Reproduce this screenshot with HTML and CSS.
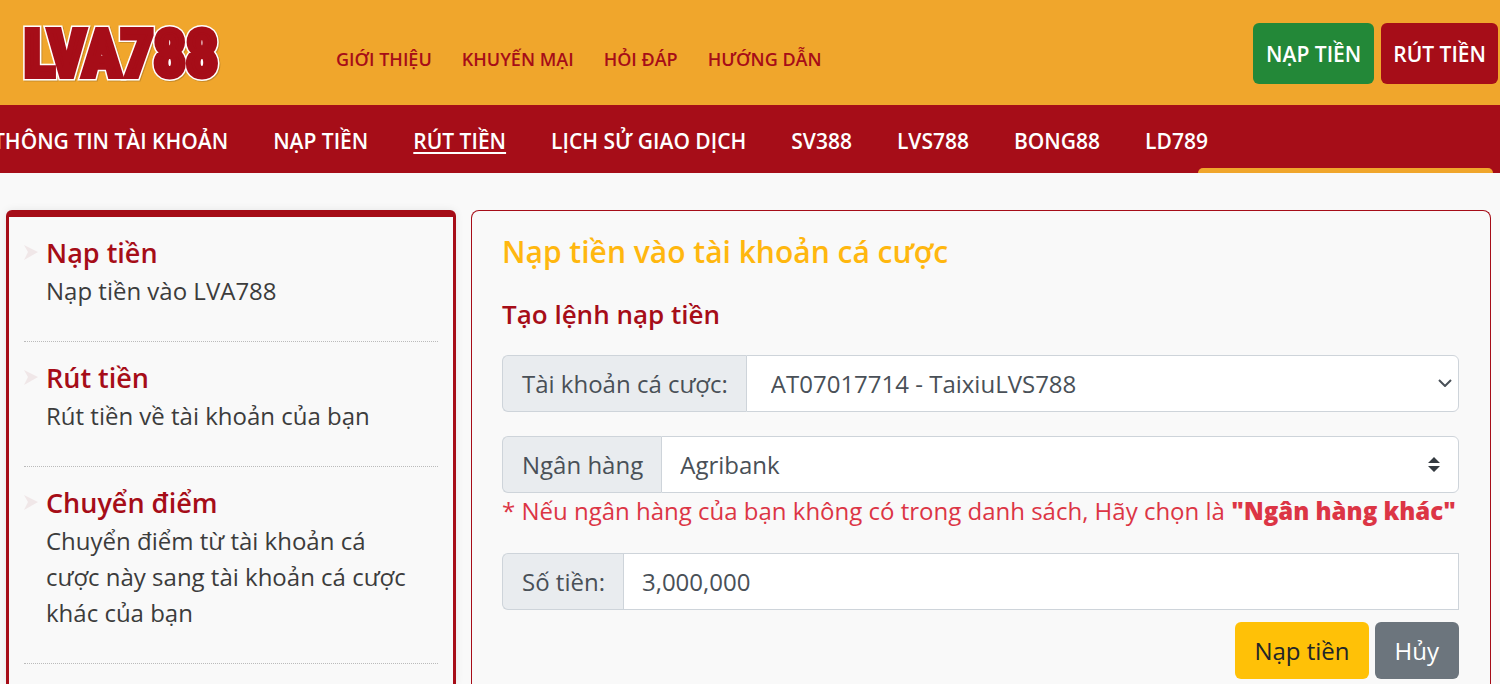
FILE: index.html
```html
<!DOCTYPE html>
<html lang="vi">
<head>
<meta charset="utf-8">
<meta name="viewport" content="width=device-width, initial-scale=1">
<title>LVA788</title>
<link rel="stylesheet" href="styles.css">
</head>
<body>
<header class="topbar">
  <a class="logo" href="#" aria-label="LVA788">
    <svg width="206" height="84" viewBox="0 0 206 84" aria-hidden="true">
      <text class="logo-shadow" x="8" y="66">LVA788</text>
      <text class="logo-outline" x="7" y="65">LVA788</text>
      <text class="logo-fill" x="7" y="65">LVA788</text>
    </svg>
  </a>
  <nav class="top-links">
    <a href="#">GIỚI THIỆU</a>
    <a href="#">KHUYẾN MẠI</a>
    <a href="#">HỎI ĐÁP</a>
    <a href="#">HƯỚNG DẪN</a>
  </nav>
  <div class="top-actions">
    <button class="action action-deposit" type="button">NẠP TIỀN</button>
    <button class="action action-withdraw" type="button">RÚT TIỀN</button>
  </div>
</header>
<nav class="menu">
  <a href="#">THÔNG TIN TÀI KHOẢN</a>
  <a href="#">NẠP TIỀN</a>
  <a class="active" href="#">RÚT TIỀN</a>
  <a href="#">LỊCH SỬ GIAO DỊCH</a>
  <a href="#">SV388</a>
  <a href="#">LVS788</a>
  <a href="#">BONG88</a>
  <a href="#">LD789</a>
  <span class="menu-tab"></span>
</nav>
<div class="layout">
  <aside class="sidebar">
    <ul class="side-list">
      <li class="side-item">
        <svg class="arrow" width="14" height="15" viewBox="0 0 14 15" aria-hidden="true"><path d="M0 0 14 7 0 15 4 7Z"/></svg>
        <a class="side-title" href="#">Nạp tiền</a>
        <p class="side-text">Nạp tiền vào LVA788</p>
      </li>
      <li class="side-item">
        <svg class="arrow" width="14" height="15" viewBox="0 0 14 15" aria-hidden="true"><path d="M0 0 14 7 0 15 4 7Z"/></svg>
        <a class="side-title" href="#">Rút tiền</a>
        <p class="side-text">Rút tiền về tài khoản của bạn</p>
      </li>
      <li class="side-item">
        <svg class="arrow" width="14" height="15" viewBox="0 0 14 15" aria-hidden="true"><path d="M0 0 14 7 0 15 4 7Z"/></svg>
        <a class="side-title" href="#">Chuyển điểm</a>
        <p class="side-text">Chuyển điểm từ tài khoản cá cược này sang tài khoản cá cược khác của bạn</p>
      </li>
    </ul>
  </aside>
  <main class="panel">
    <h1 class="panel-title">Nạp tiền vào tài khoản cá cược</h1>
    <h2 class="panel-subtitle">Tạo lệnh nạp tiền</h2>
    <form>
      <div class="group">
        <label class="addon" for="account">Tài khoản cá cược:</label>
        <div class="select-wrap">
          <select class="field field-account" id="account"><option>AT07017714 - TaixiuLVS788</option></select>
          <svg class="chevron" width="14" height="8" viewBox="0 0 14 8" aria-hidden="true"><path d="M1 1 7 7 13 1"/></svg>
        </div>
      </div>
      <div class="group">
        <label class="addon" for="bank">Ngân hàng</label>
        <div class="select-wrap">
          <select class="field" id="bank"><option>Agribank</option></select>
          <svg class="sorter" width="12" height="15" viewBox="0 0 12 15" aria-hidden="true"><path d="M0 6 6 0 12 6ZM0 9H12L6 15Z"/></svg>
        </div>
      </div>
      <p class="note">* Nếu ngân hàng của bạn không có trong danh sách, Hãy chọn là <strong>"Ngân hàng khác"</strong></p>
      <div class="group group-amount">
        <label class="addon" for="amount">Số tiền:</label>
        <input class="field field-amount" id="amount" type="text" value="3,000,000">
      </div>
      <div class="buttons">
        <button class="btn btn-submit" type="submit">Nạp tiền</button>
        <button class="btn btn-cancel" type="button">Hủy</button>
      </div>
    </form>
  </main>
</div>
</body>
</html>
```
FILE: styles.css
```css
* { box-sizing: border-box; }
body {
  margin: 0;
  min-height: 100vh;
  display: flex;
  flex-direction: column;
  overflow-x: hidden;
  background: #f9f9f9;
  color: #3c3c3c;
  font: 400 24px/36px "Open Sans", "Noto Sans", sans-serif;
}
a { color: inherit; text-decoration: none; }
p, h1, h2, ul { margin: 0; padding: 0; }
button, input, select { font: inherit; }

.topbar {
  display: flex;
  align-items: center;
  height: 105px;
  padding: 0 2px 0 17px;
  background: #f0a62c;
}
.logo { display: flex; }
.logo text {
  font: 700 64px Impact, "Roboto Condensed", "Liberation Sans", sans-serif;
  stroke-linejoin: miter;
  stroke-miterlimit: 2;
}
.logo .logo-shadow { fill: #c98b28; stroke: #c98b28; stroke-width: 9px; }
.logo .logo-outline { fill: #fff; stroke: #fff; stroke-width: 9px; }
.logo .logo-fill { fill: #a60d18; stroke: #a60d18; stroke-width: 6px; }
.top-links {
  display: flex;
  gap: 30px;
  margin-left: 113px;
  padding-top: 12px;
  color: #a60d18;
  font-size: 18px;
  font-weight: 600;
}
.top-actions { display: flex; gap: 7px; margin-left: auto; padding-top: 2px; }
.action {
  height: 61px;
  padding: 0 13px;
  border: 0;
  border-radius: 6px;
  color: #fff;
  font-size: 21px;
  font-weight: 600;
}
.action-deposit { background: #238838; }
.action-withdraw { padding: 0 12px; background: #a60d18; }

.menu {
  position: relative;
  display: flex;
  gap: 45px;
  height: 68px;
  padding-top: 18px;
  background: #a60d18;
  color: #fff;
  font-size: 21px;
  font-weight: 600;
  white-space: nowrap;
}
.menu a:first-child { margin-left: -7px; }
.menu .active { text-decoration: underline; text-decoration-thickness: 2px; text-underline-offset: 3px; }
.menu-tab {
  position: absolute;
  right: 7px;
  bottom: 0;
  width: 295px;
  height: 5px;
  border-radius: 6px 6px 0 0;
  background: #f0a62c;
}

.layout {
  flex: 1;
  display: grid;
  grid-template-columns: 15fr 34fr;
  gap: 15px;
  padding: 37px 9px 0 6px;
}
.sidebar {
  padding: 0 15px;
  border: 3px solid #a60d18;
  border-top-width: 7px;
  border-bottom: 0;
  border-radius: 6px 6px 0 0;
  box-shadow: 0 0 8px rgba(0, 0, 0, 0.08);
}
.side-list { list-style: none; }
.side-item {
  position: relative;
  padding: 18px 22px 32px;
  border-bottom: 1px dotted #bbb;
}
.arrow { position: absolute; left: 0; top: 28px; fill: #f0e7e8; }
.side-title {
  display: block;
  margin-bottom: 2px;
  color: #a60d18;
  font-size: 27px;
  font-weight: 600;
  line-height: 36px;
}

.panel {
  padding: 21px 31px 4px 30px;
  border: 1px solid #a60d18;
  border-bottom: 0;
  border-radius: 8px 8px 0 0;
}
.panel-title { color: #ffb70f; font-size: 30px; font-weight: 600; line-height: 40px; }
.panel-subtitle {
  margin-top: 25px;
  color: #a60d18;
  font-size: 26px;
  font-weight: 600;
  line-height: 34px;
}
.group { display: flex; height: 57px; margin-top: 24px; color: #495057; }
.addon {
  display: flex;
  align-items: center;
  padding: 0 18px 0 19px;
  border: 1px solid #ced4da;
  border-right: 0;
  border-radius: 6px 0 0 6px;
  background: #e9ecef;
  white-space: nowrap;
}
.select-wrap { position: relative; flex: 1; display: flex; min-width: 0; }
.field {
  flex: 1;
  min-width: 0;
  padding: 0 18px;
  border: 1px solid #ced4da;
  border-radius: 0 6px 6px 0;
  background: #fff;
  color: #495057;
  appearance: none;
}
.field-account { padding-left: 24px; }
.field-amount { border-radius: 0; }
.chevron {
  position: absolute;
  right: 7px;
  top: 24px;
  fill: none;
  stroke: #495057;
  stroke-width: 2px;
  pointer-events: none;
}
.sorter { position: absolute; right: 19px; top: 21px; fill: #343a40; pointer-events: none; }
.note { color: #dc3545; }
.note strong { font-weight: 800; }
.buttons { display: flex; justify-content: flex-end; gap: 6px; margin-top: 12px; }
.btn { height: 57px; padding: 0 20px; border: 0; border-radius: 6px; }
.btn-submit { padding: 0 19px; background: #ffc107; color: #212529; }
.btn-cancel { background: #6c757d; color: #fff; }
```
